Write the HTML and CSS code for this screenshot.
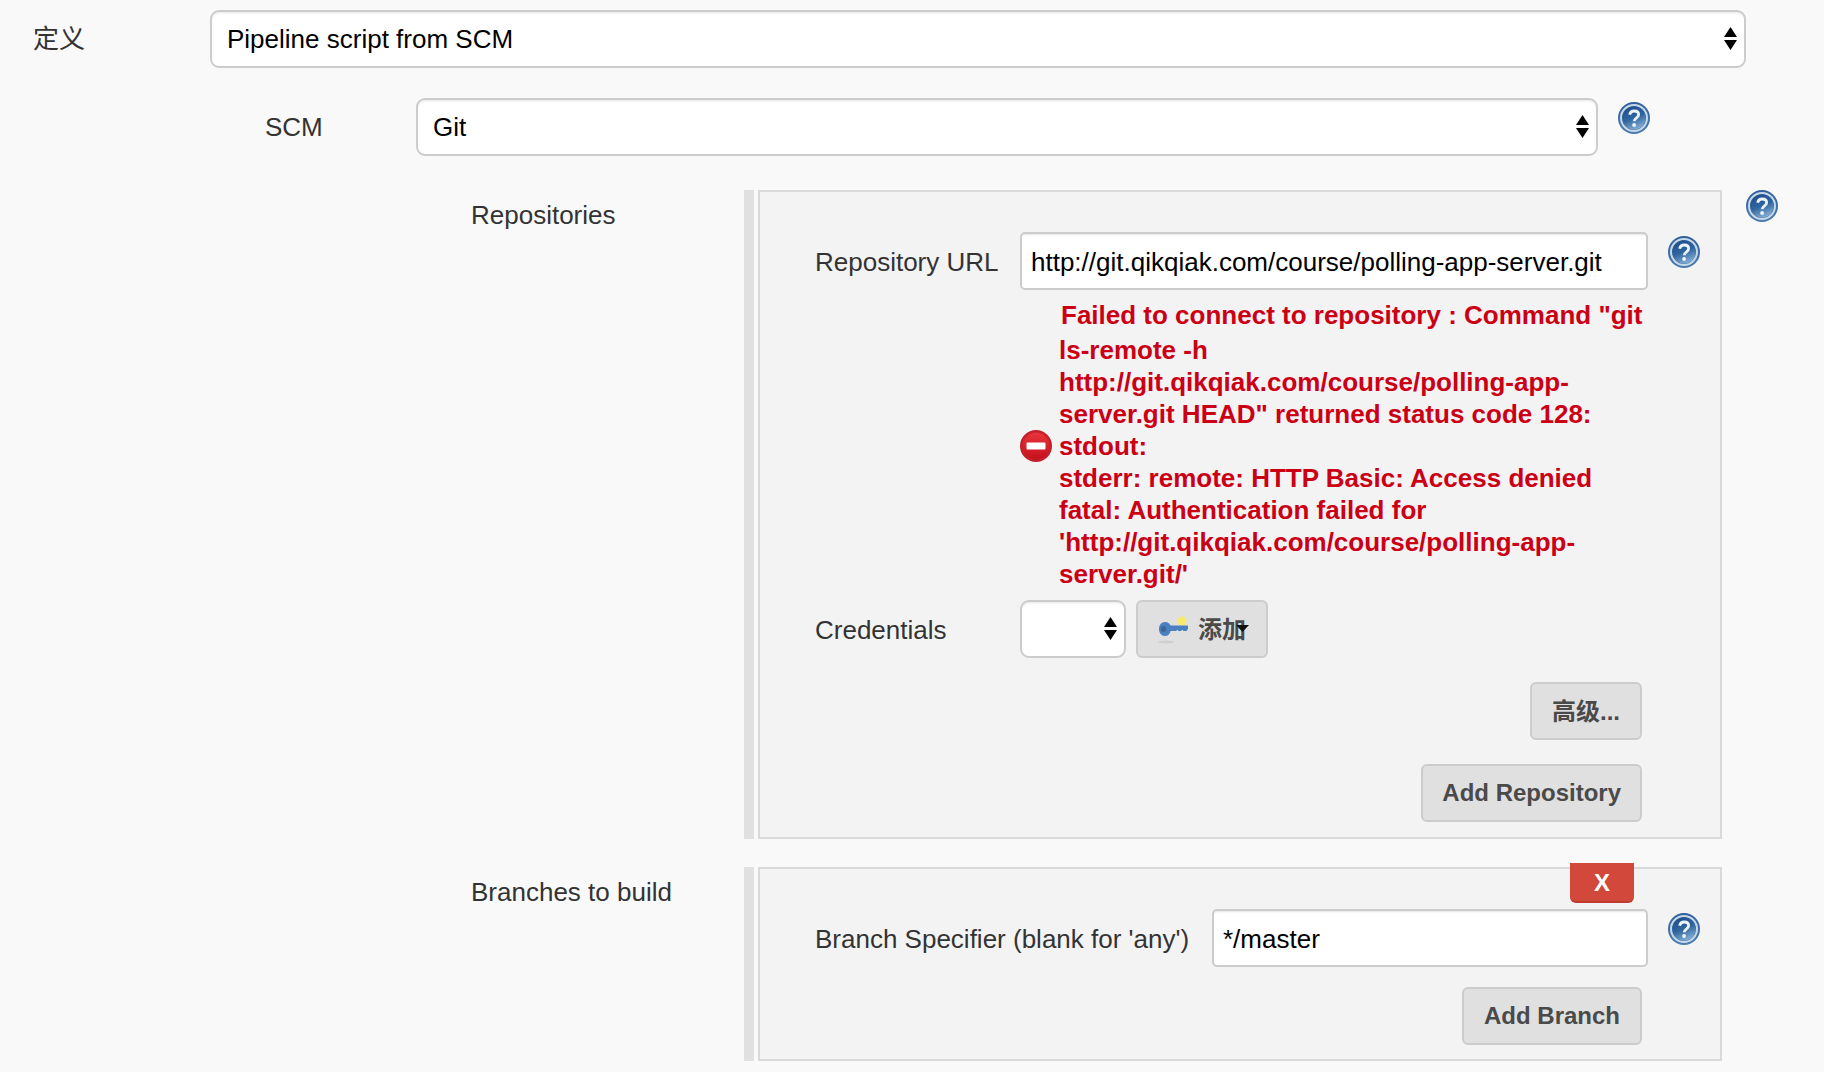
FILE: index.html
```html
<!DOCTYPE html>
<html lang="zh">
<head>
<meta charset="utf-8">
<title>Pipeline SCM</title>
<link rel="stylesheet" href="styles.css">
</head>
<body>
<svg class="defs" width="0" height="0" aria-hidden="true">
  <defs>
    <linearGradient id="helpFill" x1="0.1" y1="0" x2="0.5" y2="1">
      <stop offset="0" stop-color="#1d4c8c"/>
      <stop offset="0.55" stop-color="#2f659f"/>
      <stop offset="1" stop-color="#7fa9cf"/>
    </linearGradient>
    <linearGradient id="helpRing" x1="0" y1="0" x2="0" y2="1">
      <stop offset="0" stop-color="#2f5f9b"/>
      <stop offset="1" stop-color="#4a7cb2"/>
    </linearGradient>
    <linearGradient id="stopFill" x1="0" y1="0" x2="0" y2="1">
      <stop offset="0" stop-color="#e8343c"/>
      <stop offset="1" stop-color="#c4111c"/>
    </linearGradient>
    <symbol id="help" viewBox="0 0 32 32">
      <circle cx="16" cy="16" r="16" fill="url(#helpRing)"/>
      <circle cx="16" cy="16" r="13" fill="none" stroke="#c8d8e7" stroke-width="2"/>
      <circle cx="16" cy="16" r="11.600" fill="url(#helpFill)"/>
      <path d="M11.700 12.800c.4-2.500 2.200-3.800 4.500-3.800 2.600 0 4.400 1.500 4.400 3.700 0 3.200-4.300 3.400-4.400 6.600" fill="none" stroke="#eef3f8" stroke-width="2.800"/>
      <circle cx="16.100" cy="23" r="1.900" fill="#eef3f8"/>
    </symbol>
    <symbol id="updown" viewBox="0 0 13 23">
      <path d="M6.5 0 13 10H0zM0 13h13L6.5 23z" fill="#000"/>
    </symbol>
  </defs>
</svg>
<main class="form">
  <div class="row">
    <span class="label label-def">定义</span>
    <div class="select-box select-def">
      <select class="select"><option>Pipeline script from SCM</option></select>
      <svg class="arrows"><use href="#updown"/></svg>
    </div>
  </div>

  <div class="scm">
    <div class="row row-scm">
      <span class="label label-scm">SCM</span>
      <div class="select-box select-scm">
        <select class="select"><option>Git</option></select>
        <svg class="arrows"><use href="#updown"/></svg>
      </div>
      <svg class="help help-scm"><use href="#help"/></svg>
    </div>

    <div class="sub">
      <section class="group">
        <span class="label group-label">Repositories</span>
        <div class="bar"></div>
        <div class="panel panel-repo">
          <div class="row">
            <span class="label label-url">Repository URL</span>
            <input class="input input-url" type="text" value="http://git.qikqiak.com/course/polling-app-server.git">
            <svg class="help help-inner"><use href="#help"/></svg>
          </div>
          <div class="error">
            <svg class="stop" viewBox="0 0 32 32" aria-hidden="true">
              <circle cx="16" cy="16" r="16" fill="#c2202a"/>
              <circle cx="16" cy="16" r="13.500" fill="url(#stopFill)"/>
              <rect x="6.500" y="12.500" width="19" height="7" rx="1" fill="#fff"/>
            </svg>
            <p class="error-text"><span class="error-first">Failed to connect to repository : Command "git</span>ls-remote -h<br>http://git.qikqiak.com/course/polling-app-<br>server.git HEAD" returned status code 128:<br>stdout:<br>stderr: remote: HTTP Basic: Access denied<br>fatal: Authentication failed for<br>'http://git.qikqiak.com/course/polling-app-<br>server.git/'</p>
          </div>
          <div class="row row-cred">
            <span class="label label-url">Credentials</span>
            <div class="select-box select-cred">
              <select class="select"><option></option></select>
              <svg class="arrows"><use href="#updown"/></svg>
            </div>
            <button class="btn btn-add" type="button">
              <svg class="key" viewBox="0 0 32 30" aria-hidden="true">
                <circle cx="24" cy="7" r="4.500" fill="#f7ea6a"/>
                <ellipse cx="8" cy="28" rx="8" ry="1.500" fill="#cfcfcf"/>
                <path d="M7 8c2.800 0 4.800 1.600 5.600 3.500H30v3.500l-1.500 2h-3l-1.200-1.200-1.200 1.200h-2.600l-1.200-1.200-1.200 1.200h-5.500C11.800 20.200 9.800 22 7 22c-3.600 0-6-3.200-6-7s2.400-7 6-7Z" fill="#4a80c0"/>
                <ellipse cx="5.500" cy="15" rx="2.600" ry="3" fill="#3f6598"/>
              </svg>
              <span class="btn-text">添加</span>
              <svg class="caret" viewBox="0 0 13 7" aria-hidden="true"><path d="M0 0h13L6.500 7z" fill="#111"/></svg>
            </button>
          </div>
          <div class="actions actions-adv">
            <button class="btn btn-cjk" type="button">高级...</button>
          </div>
          <div class="actions actions-repo">
            <button class="btn btn-repo" type="button">Add Repository</button>
          </div>
        </div>
        <svg class="help help-group"><use href="#help"/></svg>
      </section>

      <section class="group group-branch">
        <span class="label group-label">Branches to build</span>
        <div class="bar"></div>
        <div class="panel panel-branch">
          <button class="delete" type="button">X</button>
          <div class="row">
            <span class="label label-branch">Branch Specifier (blank for 'any')</span>
            <input class="input input-branch" type="text" value="*/master">
            <svg class="help help-inner"><use href="#help"/></svg>
          </div>
          <div class="actions actions-branch">
            <button class="btn" type="button">Add Branch</button>
          </div>
        </div>
      </section>
    </div>
  </div>
</main>
</body>
</html>
```

FILE: styles.css
```css
* { box-sizing: border-box; }

html, body {
  margin: 0;
  height: 100%;
  overflow: hidden;
  background: #f9f9f9;
}

body {
  font-family: "Liberation Sans", "Noto Sans CJK SC", sans-serif;
  font-size: 26px;
  color: #333;
}

.defs { position: absolute; }

.form { padding: 10px 0 0 33px; }

.row { display: flex; align-items: flex-start; }

.label {
  flex: none;
  height: 58px;
  line-height: 59px;
  color: #333;
}

.label-def { width: 177px; }
.label-scm { width: 151px; }
.label-url { width: 205px; line-height: 61px; }
.label-branch { width: 397px; line-height: 61px; }

.scm { margin-left: 232px; }
.row-scm { margin-top: 30px; }
.sub { margin-left: 206px; }

.select-box {
  position: relative;
  flex: none;
  height: 58px;
}
.select-def { width: 1536px; }
.select-scm { width: 1182px; }
.select-cred { width: 106px; }

.select {
  display: block;
  width: 100%;
  height: 100%;
  margin: 0;
  padding: 0 40px 0 15px;
  appearance: none;
  -webkit-appearance: none;
  font: inherit;
  color: #000;
  background: #fff;
  border: 2px solid #ccc;
  border-radius: 9px;
  box-shadow: inset 0 3px 3px -2px #e6e6e6;
}

.arrows {
  position: absolute;
  top: 17px;
  right: 9px;
  width: 13px;
  height: 23px;
  pointer-events: none;
}

.input {
  flex: none;
  height: 58px;
  margin: 0;
  padding: 3px 8px 0 9px;
  font: inherit;
  color: #000;
  background: #fff;
  border: 2px solid #ccc;
  border-radius: 5px;
  box-shadow: inset 0 2px 2px -1px #e6e6e6;
}
.input-url { width: 628px; }
.input-branch { width: 436px; }

.help { flex: none; width: 32px; height: 32px; }
.help-scm { margin: 4px 0 0 20px; }
.help-inner { margin: 4px 0 0 20px; }
.help-group { margin-left: 24px; }

.group { display: flex; align-items: stretch; margin-top: 34px; }
.group-branch { margin-top: 28px; }

.group-label {
  width: 273px;
  height: auto;
  padding-top: 10px;
  line-height: 30px;
}

.bar {
  flex: none;
  width: 10px;
  margin-right: 4px;
  background: #e0e0e0;
}

.panel {
  position: relative;
  flex: none;
  width: 964px;
  padding: 40px 0 0 55px;
  background: #f3f3f3;
  border: 2px solid #d9d9d9;
}
.panel-repo { height: 649px; }
.panel-branch { height: 194px; padding-top: 40px; }

.error {
  display: flex;
  align-items: center;
  margin: 9px 0 10px 205px;
}
.stop { flex: none; width: 32px; height: 32px; margin: 2px 7px 0 0; }
.error-text {
  margin: 0;
  font-weight: 700;
  line-height: 32px;
  color: #cc0015;
  white-space: nowrap;
}
.error-first { display: block; padding-left: 2px; margin-bottom: 3px; }

.btn {
  flex: none;
  height: 58px;
  margin: 0;
  padding: 0 20px;
  font: inherit;
  font-size: 24px;
  font-weight: 700;
  color: #4a4a4a;
  background: #e0e0e0;
  border: 2px solid #ccc;
  border-radius: 6px;
}

.btn-cjk { padding-bottom: 4px; }
.btn-repo { padding: 0 19px; }

.btn-add {
  position: relative;
  display: flex;
  align-items: center;
  width: 132px;
  margin-left: 10px;
  padding: 0 0 0 20px;
}
.btn-text { position: relative; top: -2px; }
.key { flex: none; width: 32px; height: 30px; margin-right: 8px; }
.caret {
  position: absolute;
  top: 23px;
  right: 17px;
  width: 13px;
  height: 7px;
}

.actions { display: flex; justify-content: flex-end; padding-right: 78px; }
.actions-adv { margin-top: 24px; }
.actions-repo { margin-top: 24px; }
.actions-branch { margin-top: 20px; }

.delete {
  position: absolute;
  top: -6px;
  right: 86px;
  width: 64px;
  height: 40px;
  margin: 0;
  padding: 2px 0 0;
  font: inherit;
  font-size: 24px;
  font-weight: 700;
  color: #fff;
  background: #d2493c;
  border: 0;
  border-bottom: 2px solid #bd3b2f;
  border-radius: 0 0 6px 6px;
}
```
